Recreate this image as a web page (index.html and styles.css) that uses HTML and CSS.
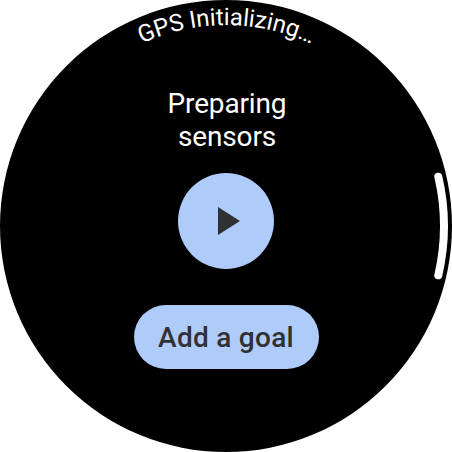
FILE: index.html
```html
<!DOCTYPE html>
<html lang="en">
<head>
<meta charset="utf-8">
<title>Exercise</title>
<link rel="stylesheet" href="styles.css">
</head>
<body>
<main class="watch">
  <svg class="overlay" viewBox="0 0 452 452" aria-hidden="true">
    <path id="time-arc" d="M 25 226 A 201 201 0 0 1 427 226" fill="none"/>
    <text class="curved-text" text-anchor="middle"><textPath href="#time-arc" startOffset="50.1%">GPS Initializing…</textPath></text>
    <path class="scroll-bar" d="M 438.3 176.7 A 218 218 0 0 1 438.3 275.3"/>
  </svg>
  <h1 class="status">Preparing<br>sensors</h1>
  <button class="play" aria-label="Start">
    <svg class="play-icon" viewBox="0 0 24 28"><path d="M1 0 L23 14 L1 28 Z"/></svg>
  </button>
  <button class="goal">Add a goal</button>
</main>
</body>
</html>
```
FILE: styles.css
```css
body {
  margin: 0;
  background: #fff;
  font-family: Roboto, sans-serif;
}

.watch {
  position: relative;
  box-sizing: border-box;
  width: 452px;
  height: 452px;
  padding-top: 87px;
  border-radius: 50%;
  background: #000;
  display: flex;
  flex-direction: column;
  align-items: center;
  overflow: hidden;
}

.overlay {
  position: absolute;
  inset: 0;
  width: 452px;
  height: 452px;
}

.curved-text {
  fill: #fff;
  font-size: 24px;
  letter-spacing: -0.08px;
}

.scroll-bar {
  fill: none;
  stroke: #fff;
  stroke-width: 8;
  stroke-linecap: round;
}

.status {
  margin: 0;
  padding-left: 2px;
  color: #fff;
  font-size: 28px;
  font-weight: 400;
  line-height: 33px;
  letter-spacing: -0.14px;
  text-align: center;
}

.play,
.goal {
  border: 0;
  padding: 0;
  background: #aecbfa;
  color: #303133;
  font-family: inherit;
}

.play {
  width: 96px;
  height: 96px;
  margin-top: 20px;
  border-radius: 50%;
  display: flex;
  align-items: center;
  justify-content: center;
}

.play-icon {
  width: 24px;
  height: 28px;
  margin-left: 6px;
  fill: #303133;
}

.goal {
  width: 185px;
  height: 64px;
  margin-top: 36px;
  border-radius: 32px;
  font-size: 28px;
  font-weight: 500;
  letter-spacing: 0.28px;
}
```
